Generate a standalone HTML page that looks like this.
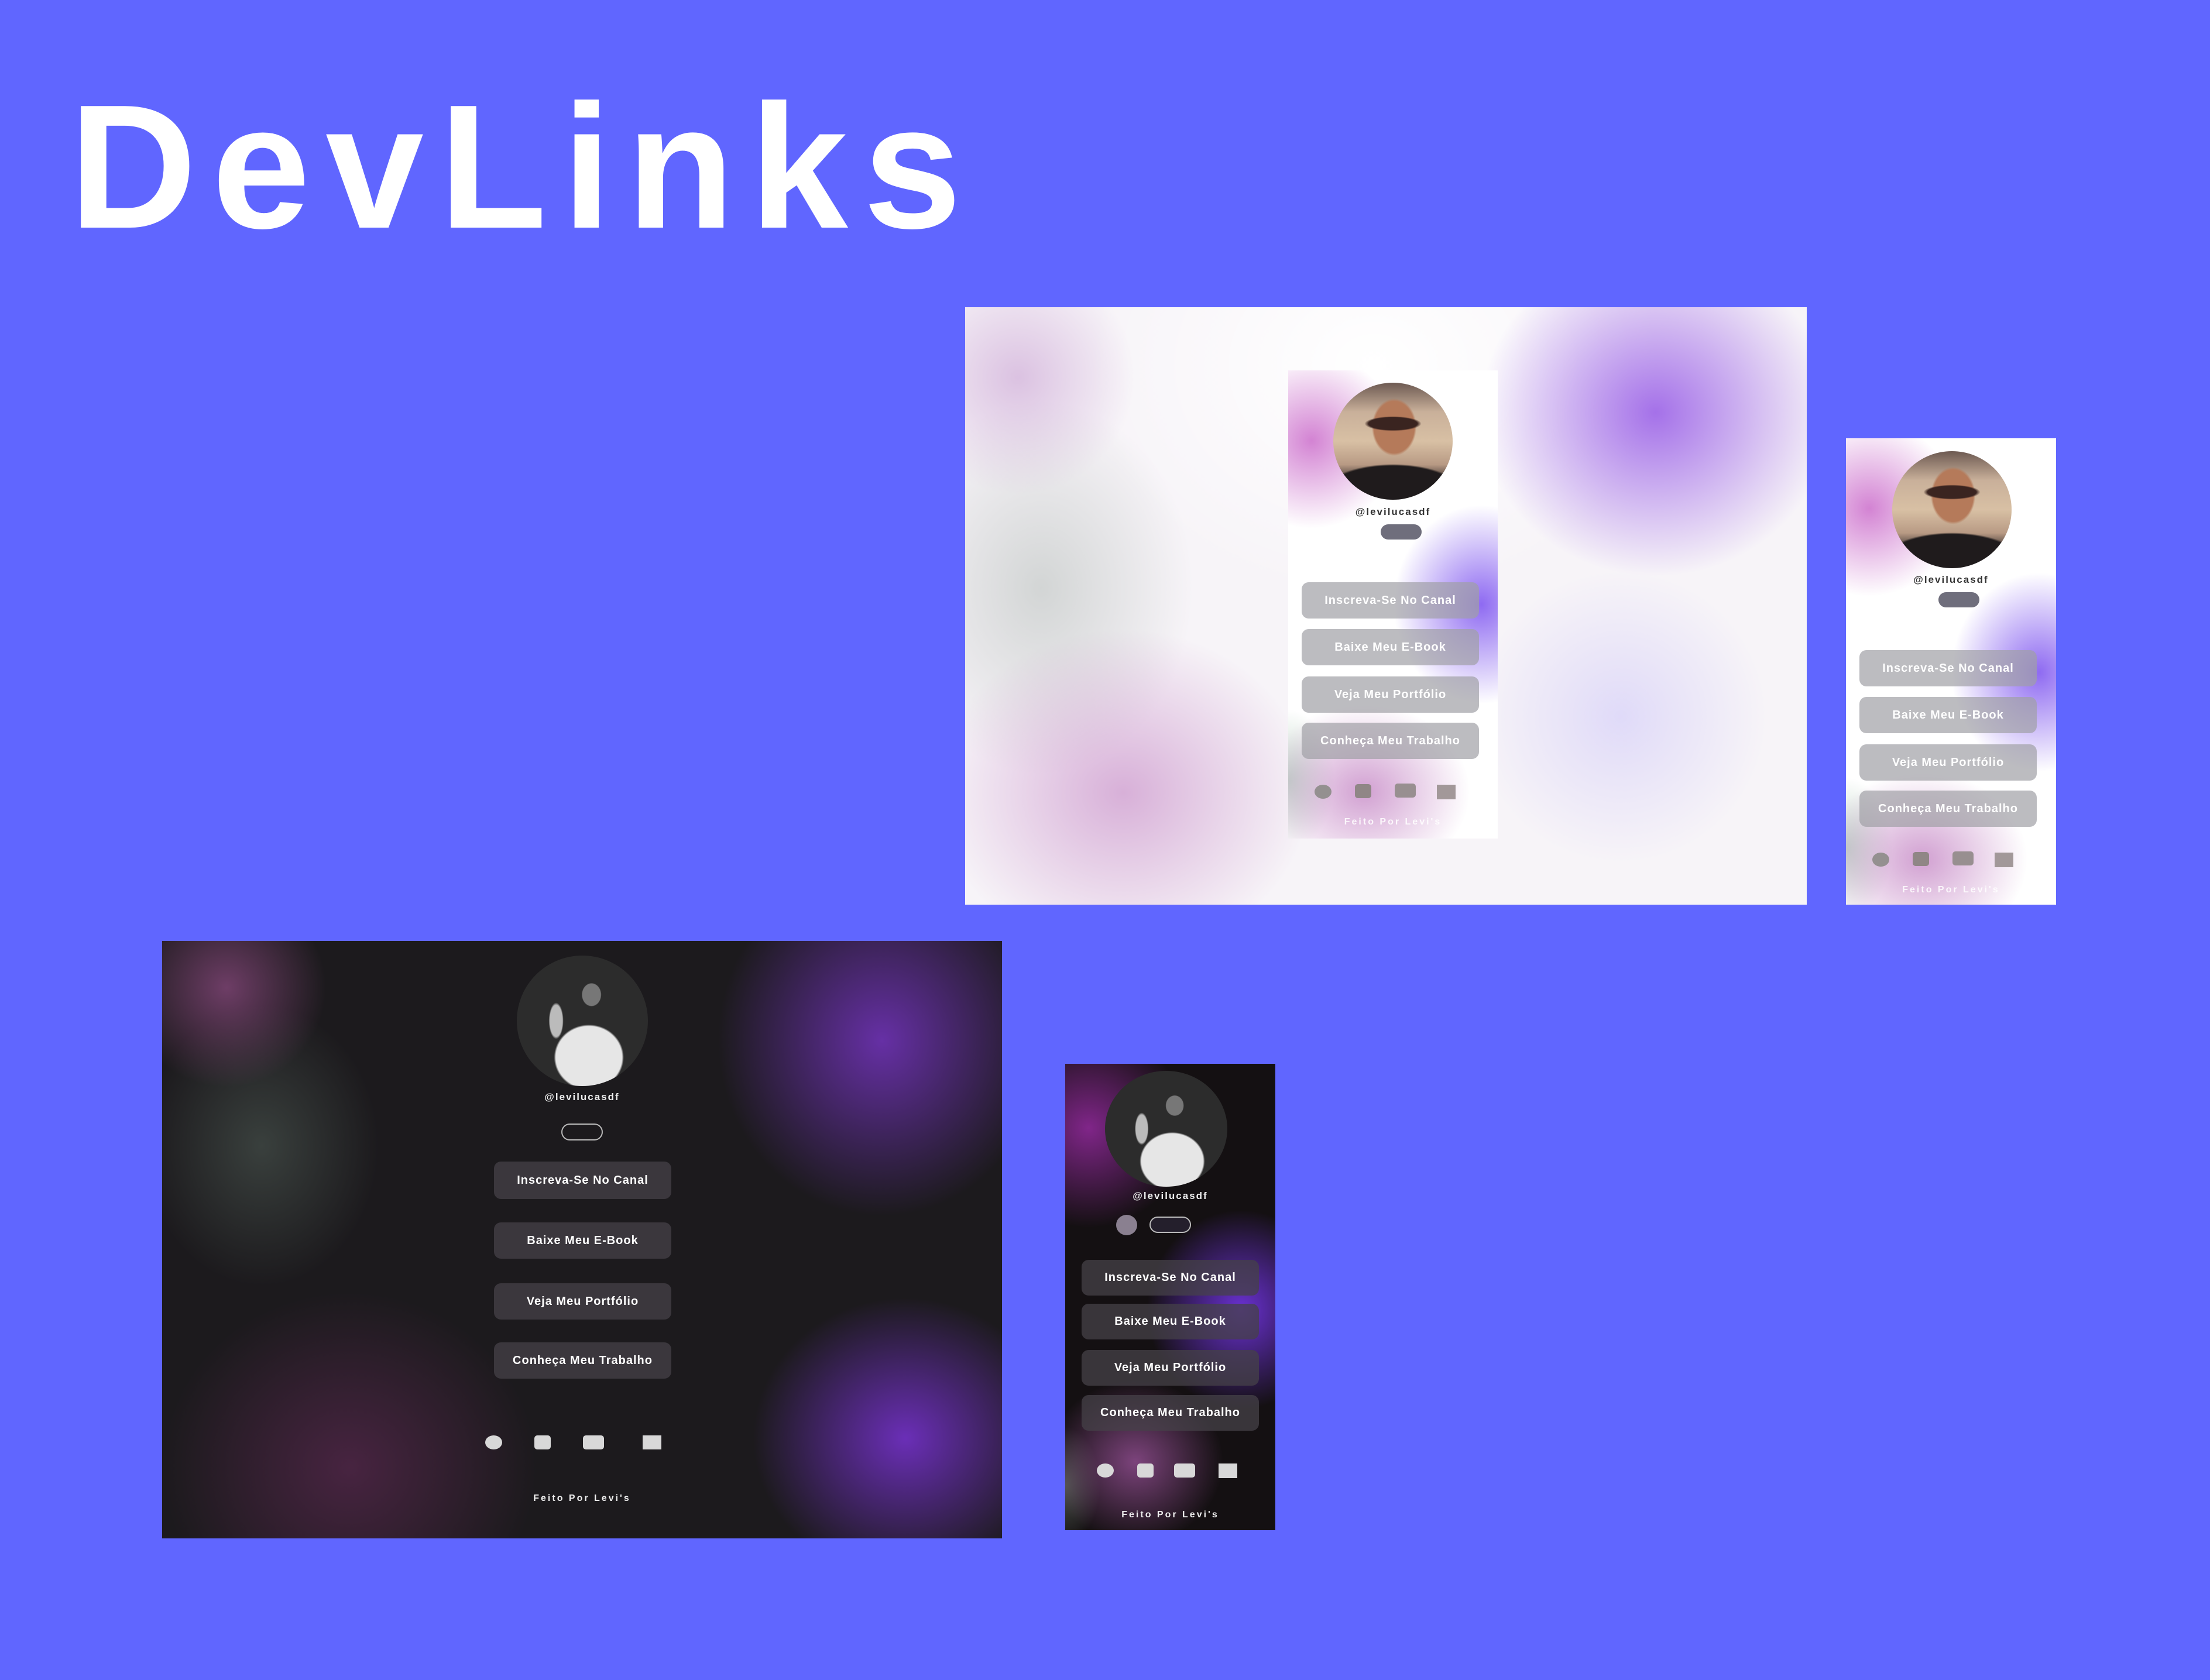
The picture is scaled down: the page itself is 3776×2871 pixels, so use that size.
<!DOCTYPE html>
<html><head><meta charset="utf-8"><style>
*{margin:0;padding:0;box-sizing:border-box}
body{width:3776px;height:2871px;background:#6066ff;position:relative;overflow:hidden;font-family:"Liberation Sans",sans-serif}
.a{position:absolute}
.title{left:118px;top:134px;font-size:302px;line-height:1;color:#fff;letter-spacing:26px;font-weight:700}
.btn{position:absolute;border-radius:12px;color:#fff;font-weight:700;font-size:20px;letter-spacing:1px;display:flex;align-items:center;justify-content:center;white-space:nowrap}
.lb{background:rgba(160,160,165,.7)}
.db{background:rgba(70,66,72,.75)}
.user{position:absolute;left:0;right:0;text-align:center;font-weight:700;font-size:17px;letter-spacing:2px;line-height:20px}
.foot{position:absolute;left:0;right:0;text-align:center;font-weight:700;font-size:16px;letter-spacing:3px;line-height:20px}
.lav{border-radius:50%;background:
radial-gradient(ellipse 34% 9% at 50% 35%,#3a2420 0 60%,transparent 70%),
radial-gradient(ellipse 26% 34% at 51% 38%,#b57a5a 0 65%,transparent 72%),
radial-gradient(ellipse 70% 30% at 50% 95%,#1f1b1c 0 80%,transparent 85%),
linear-gradient(180deg,#6d5a52 0%,#c9b09a 25%,#d8c0a4 50%,#b89a84 70%,#2b2424 85%,#1e1b1c 100%)}
.dav{border-radius:50%;background:
radial-gradient(ellipse 36% 34% at 55% 78%,#e6e6e6 0 70%,transparent 74%),
radial-gradient(ellipse 10% 12% at 57% 30%,#777 0 70%,transparent 75%),
radial-gradient(ellipse 8% 20% at 30% 50%,#bbb 0 60%,transparent 70%),
#2c2c2c}
</style></head><body>
<div class="a title">DevLinks</div>

<!-- light desktop -->
<div class="a" style="left:1649px;top:525px;width:1438px;height:1021px;overflow:hidden;background:
radial-gradient(ellipse 300px 280px at 1180px 180px,rgba(150,90,230,.85),transparent),
radial-gradient(ellipse 250px 250px at 1120px 700px,rgba(180,170,250,.35),transparent),
radial-gradient(ellipse 320px 280px at 270px 830px,rgba(190,120,190,.55),transparent),
radial-gradient(ellipse 200px 200px at 90px 120px,rgba(200,160,210,.6),transparent),
radial-gradient(ellipse 260px 320px at 130px 480px,rgba(195,200,198,.7),transparent),
radial-gradient(ellipse 500px 400px at 700px 100px,#fff,transparent),
#f7f4f8">
 <div class="a" style="left:552px;top:108px;width:358px;height:800px;overflow:hidden;background:
 radial-gradient(ellipse 150px 150px at 40px 120px,rgba(200,100,200,.8),transparent),
 radial-gradient(ellipse 150px 170px at 330px 400px,rgba(130,90,240,.9),transparent),
 radial-gradient(ellipse 180px 150px at 130px 720px,rgba(190,120,190,.7),transparent),
 radial-gradient(ellipse 80px 120px at 0px 700px,rgba(170,200,180,.7),transparent),
 #fff">
  <div class="a lav" style="left:77px;top:21px;width:204px;height:200px"></div>
  <div class="user" style="top:232px;color:#333">@levilucasdf</div>
  <div class="a" style="left:158px;top:263px;width:70px;height:26px;border-radius:13px;background:#6f6e7c"></div>
  <div class="btn lb" style="left:23px;top:362px;width:303px;height:62px">Inscreva-Se No Canal</div>
  <div class="btn lb" style="left:23px;top:442px;width:303px;height:62px">Baixe Meu E-Book</div>
  <div class="btn lb" style="left:23px;top:523px;width:303px;height:62px">Veja Meu Portfólio</div>
  <div class="btn lb" style="left:23px;top:602px;width:303px;height:62px">Conheça Meu Trabalho</div>
  <div class="a" style="left:45px;top:708px;width:29px;height:24px;border-radius:50%;background:#949090"></div>
  <div class="a" style="left:114px;top:707px;width:28px;height:24px;border-radius:5px;background:#908686"></div>
  <div class="a" style="left:182px;top:706px;width:36px;height:24px;border-radius:5px;background:#988f90"></div>
  <div class="a" style="left:254px;top:708px;width:32px;height:25px;background:#a29899"></div>
  <div class="foot" style="top:762px;color:rgba(255,255,255,.85)">Feito Por Levi's</div>
 </div>
</div>

<!-- light mobile -->
<div class="a" style="left:3154px;top:749px;width:359px;height:797px;overflow:hidden;background:
 radial-gradient(ellipse 150px 150px at 40px 120px,rgba(200,100,200,.8),transparent),
 radial-gradient(ellipse 150px 170px at 330px 400px,rgba(130,90,240,.9),transparent),
 radial-gradient(ellipse 180px 150px at 130px 720px,rgba(190,120,190,.7),transparent),
 radial-gradient(ellipse 80px 120px at 0px 700px,rgba(170,200,180,.7),transparent),
 #fff">
  <div class="a lav" style="left:79px;top:22px;width:204px;height:200px"></div>
  <div class="user" style="top:232px;color:#333">@levilucasdf</div>
  <div class="a" style="left:158px;top:263px;width:70px;height:26px;border-radius:13px;background:#6f6e7c"></div>
  <div class="btn lb" style="left:23px;top:362px;width:303px;height:62px">Inscreva-Se No Canal</div>
  <div class="btn lb" style="left:23px;top:442px;width:303px;height:62px">Baixe Meu E-Book</div>
  <div class="btn lb" style="left:23px;top:523px;width:303px;height:62px">Veja Meu Portfólio</div>
  <div class="btn lb" style="left:23px;top:602px;width:303px;height:62px">Conheça Meu Trabalho</div>
  <div class="a" style="left:45px;top:708px;width:29px;height:24px;border-radius:50%;background:#949090"></div>
  <div class="a" style="left:114px;top:707px;width:28px;height:24px;border-radius:5px;background:#908686"></div>
  <div class="a" style="left:182px;top:706px;width:36px;height:24px;border-radius:5px;background:#988f90"></div>
  <div class="a" style="left:254px;top:708px;width:32px;height:25px;background:#a29899"></div>
  <div class="foot" style="top:762px;color:rgba(255,255,255,.85)">Feito Por Levi's</div>
</div>

<!-- dark desktop -->
<div class="a" style="left:277px;top:1608px;width:1435px;height:1021px;overflow:hidden;background:
radial-gradient(ellipse 280px 300px at 1230px 170px,rgba(110,50,180,.9),transparent),
radial-gradient(ellipse 260px 240px at 1270px 850px,rgba(120,50,210,.85),transparent),
radial-gradient(ellipse 170px 170px at 110px 80px,rgba(130,70,120,.8),transparent),
radial-gradient(ellipse 200px 240px at 170px 350px,rgba(70,80,75,.7),transparent),
radial-gradient(ellipse 320px 300px at 320px 900px,rgba(90,40,80,.7),transparent),
#1c1a1d">
  <div class="a dav" style="left:606px;top:25px;width:224px;height:223px"></div>
  <div class="user" style="top:257px;color:#eee">@levilucasdf</div>
  <div class="a" style="left:682px;top:312px;width:71px;height:29px;border-radius:15px;border:2px solid #bbb"></div>
  <div class="btn db" style="left:567px;top:377px;width:303px;height:64px">Inscreva-Se No Canal</div>
  <div class="btn db" style="left:567px;top:481px;width:303px;height:62px">Baixe Meu E-Book</div>
  <div class="btn db" style="left:567px;top:585px;width:303px;height:62px">Veja Meu Portfólio</div>
  <div class="btn db" style="left:567px;top:686px;width:303px;height:62px">Conheça Meu Trabalho</div>
  <div class="a" style="left:552px;top:845px;width:29px;height:24px;border-radius:50%;background:#d8d8d8"></div>
  <div class="a" style="left:636px;top:845px;width:28px;height:24px;border-radius:5px;background:#d8d8d8"></div>
  <div class="a" style="left:719px;top:845px;width:36px;height:24px;border-radius:5px;background:#d8d8d8"></div>
  <div class="a" style="left:821px;top:845px;width:32px;height:24px;background:#d8d8d8"></div>
  <div class="foot" style="top:943px;color:#eee">Feito Por Levi's</div>
</div>

<!-- dark mobile -->
<div class="a" style="left:1820px;top:1818px;width:359px;height:797px;overflow:hidden;background:
radial-gradient(ellipse 170px 170px at 40px 110px,rgba(140,40,150,.9),transparent),
radial-gradient(ellipse 160px 170px at 300px 420px,rgba(110,50,220,.95),transparent),
radial-gradient(ellipse 150px 140px at 120px 680px,rgba(150,80,150,.8),transparent),
radial-gradient(ellipse 60px 100px at 0px 720px,rgba(90,100,90,.8),transparent),
#141012">
  <div class="a dav" style="left:68px;top:12px;width:209px;height:198px"></div>
  <div class="user" style="top:216px;color:#eee">@levilucasdf</div>
  <div class="a" style="left:87px;top:258px;width:36px;height:35px;border-radius:50%;background:#8a8090"></div>
  <div class="a" style="left:144px;top:261px;width:71px;height:28px;border-radius:14px;border:2px solid #bbb;background:#241f2c"></div>
  <div class="btn db" style="left:28px;top:335px;width:303px;height:61px">Inscreva-Se No Canal</div>
  <div class="btn db" style="left:28px;top:410px;width:303px;height:61px">Baixe Meu E-Book</div>
  <div class="btn db" style="left:28px;top:489px;width:303px;height:61px">Veja Meu Portfólio</div>
  <div class="btn db" style="left:28px;top:566px;width:303px;height:61px">Conheça Meu Trabalho</div>
  <div class="a" style="left:54px;top:683px;width:29px;height:24px;border-radius:50%;background:#d8d8d8"></div>
  <div class="a" style="left:123px;top:683px;width:28px;height:24px;border-radius:5px;background:#d8d8d8"></div>
  <div class="a" style="left:186px;top:683px;width:36px;height:24px;border-radius:5px;background:#d8d8d8"></div>
  <div class="a" style="left:262px;top:683px;width:32px;height:25px;background:#d8d8d8"></div>
  <div class="foot" style="top:761px;color:#eee">Feito Por Levi's</div>
</div>
</body></html>
